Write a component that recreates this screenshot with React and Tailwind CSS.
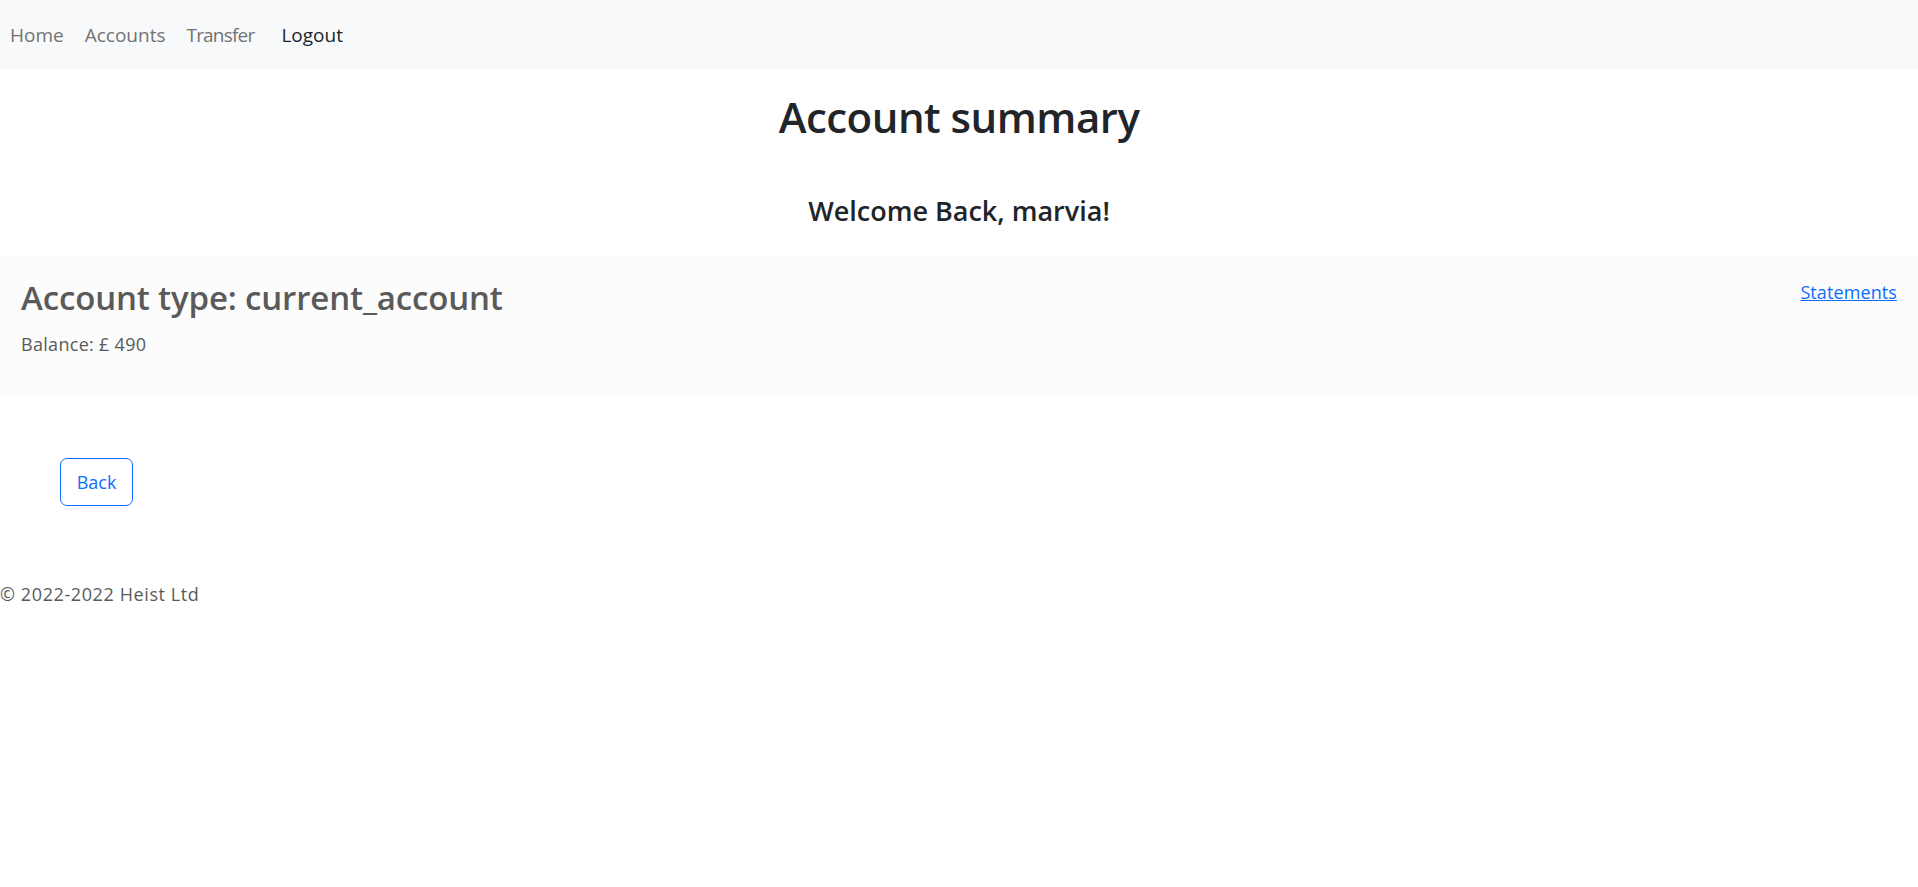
export default function App() {
  const font = { fontFamily: '"Open Sans", "Noto Sans", sans-serif' };
  return (
    <div className="min-h-[887px] bg-white text-[#212529]" style={font}>
      <nav className="h-[69px] bg-[#f8f9fa] flex items-center pl-[10px] pt-[2px] text-[19px] leading-none">
        <a className="text-[#737373] mr-[21px]">Home</a>
        <a className="text-[#737373] mr-[21px]">Accounts</a>
        <a className="text-[#737373] mr-[27px] tracking-[-0.8px]">Transfer</a>
        <a className="text-[#212529]">Logout</a>
      </nav>
      <h1 className="text-center text-[42px] font-semibold leading-none mt-[27px] tracking-[-0.5px]">Account summary</h1>
      <h4 className="text-center text-[27px] font-semibold leading-none mt-[59px] tracking-[0px]">Welcome Back, marvia!</h4>
      <div className="mt-[31px] h-[140px] bg-[#fcfcfc] flex justify-between px-[21px] pt-[26px]">
        <div>
          <h3 className="text-[33px] font-semibold leading-none text-[#5a5a5a] tracking-[-0.15px]">Account type: current_account</h3>
          <p className="text-[18px] text-[#5a5a5a] mt-[21px] leading-none tracking-[0.3px]">Balance: £ 490</p>
        </div>
        <a className="text-[18px] text-[#0d6efd] underline leading-none mt-[2px] tracking-[0.1px]">Statements</a>
      </div>
      <div className="pl-[60px] mt-[63px]">
        <button className="w-[73px] h-[48px] border border-[#0d6efd] rounded-[7px] text-[#0d6efd] text-[18px] leading-none">Back</button>
      </div>
      <footer className="mt-[79px] text-[18px] text-[#5a5a5a] leading-none tracking-[0.6px]">© 2022-2022 Heist Ltd</footer>
    </div>
  );
}
